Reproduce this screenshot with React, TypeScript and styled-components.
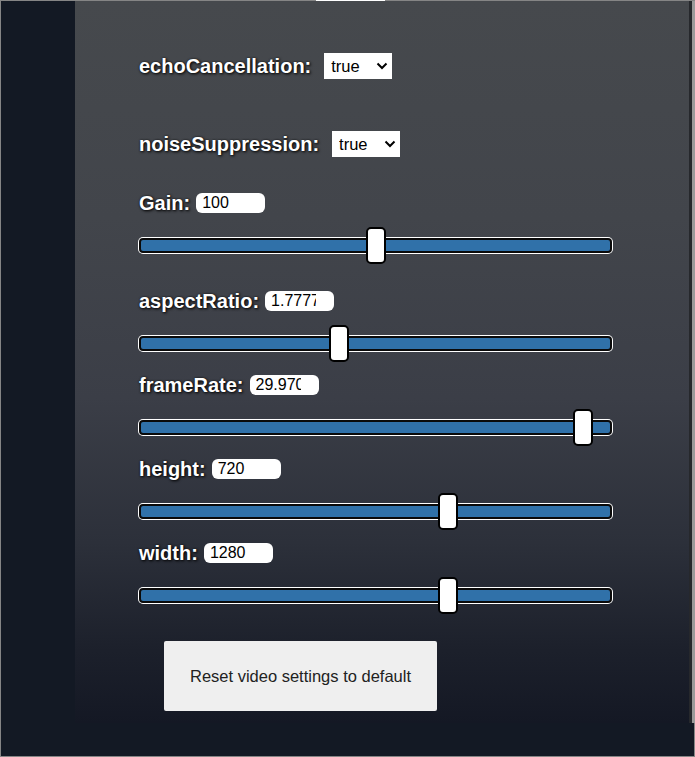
import React from "react";
import styled, { createGlobalStyle } from "styled-components";

const GlobalStyle = createGlobalStyle`
  html, body { margin: 0; padding: 0; background: #131924; }
  * { box-sizing: border-box; }
`;

const Frame = styled.div`
  position: relative;
  width: 695px;
  height: 757px;
  border: 1px solid #858585;
  background: #131924;
  display: flex;
  align-items: flex-start;
  padding-left: 74px;
  font-family: "Liberation Sans", Arial, sans-serif;
`;

const TopEdge = styled.div`
  position: absolute;
  top: -1px;
  left: 315px;
  width: 69px;
  height: 1px;
  background: #ffffff;
`;

const Panel = styled.main`
  width: 617px;
  height: 722px;
  border-right: 3px solid #26282c;
  box-shadow: 3px 0 0 #9a9a9a;
  background: linear-gradient(
    180deg,
    #46494d 0%,
    #42454b 30%,
    #3b3e47 55%,
    #2c303a 75%,
    #1c202b 90%,
    #141824 100%
  );
  padding: 52px 0 0 64px;
  display: flex;
  flex-direction: column;
`;

const SelectRow = styled.div<{ $gap: number }>`
  display: flex;
  align-items: center;
  gap: 13px;
  height: 26px;
  margin-top: ${(p) => p.$gap}px;
`;

const Label = styled.label`
  color: #ffffff;
  font-size: 20px;
  font-weight: bold;
  text-shadow: 1px 1px 3px #000, 0 0 2px rgba(0, 0, 0, 0.6);
  white-space: nowrap;
`;

const SelectBox = styled.div`
  display: inline-flex;
  align-items: center;
  width: 68px;
  height: 26px;
  background: #ffffff;
  padding: 0 4px 0 7px;
`;

const Select = styled.select`
  appearance: none;
  -webkit-appearance: none;
  border: none;
  outline: none;
  background: transparent;
  font-family: "Liberation Sans", Arial, sans-serif;
  font-size: 16.5px;
  color: #000;
  padding: 0;
  margin: 0;
  flex: 1;
  min-width: 0;
`;

const Chevron = styled.svg`
  width: 12px;
  height: 8px;
  pointer-events: none;
  flex: none;
`;

const Section = styled.section<{ $top: number; $after: number }>`
  display: flex;
  flex-direction: column;
  gap: 13px;
  margin-top: ${(p) => p.$top}px;
  margin-bottom: ${(p) => p.$after}px;
`;

const Field = styled.div`
  display: flex;
  flex-direction: column;
  gap: 13px;
`;

const FieldHead = styled.div`
  display: flex;
  align-items: center;
  gap: 6px;
  height: 20px;
`;

const NumberBox = styled.div`
  display: inline-flex;
  align-items: center;
  width: 69px;
  height: 20px;
  border-radius: 6px;
  background: #ffffff;
  padding: 0 0 0 6px;
`;

const NumberInput = styled.input`
  width: 45px;
  height: 20px;
  border: none;
  outline: none;
  background: transparent;
  padding: 0;
  margin: 0;
  font-family: "Liberation Sans", Arial, sans-serif;
  font-size: 16px;
  color: #000;
  -moz-appearance: textfield;

  &::-webkit-inner-spin-button,
  &::-webkit-outer-spin-button {
    -webkit-appearance: none;
    display: none;
    margin: 0;
  }
`;

const Range = styled.input`
  -webkit-appearance: none;
  appearance: none;
  width: 473px;
  height: 38px;
  margin: 0;
  padding: 0;
  background: transparent;

  &::-webkit-slider-runnable-track {
    box-sizing: border-box;
    height: 15px;
    background: #3071a9;
    border: 2px solid #0a0a0a;
    border-radius: 4px;
    box-shadow: 0 0 0 1px #ffffff;
  }

  &::-webkit-slider-thumb {
    -webkit-appearance: none;
    box-sizing: border-box;
    width: 20px;
    height: 37px;
    border: 2px solid #000;
    border-radius: 5px;
    background: #ffffff;
    margin-top: -13px;
  }
`;

const ResetButton = styled.button`
  margin-left: 25px;
  margin-top: 27px;
  width: 273px;
  height: 70px;
  border: none;
  border-radius: 2px;
  background: #efefef;
  color: #222;
  font-family: "Liberation Sans", Arial, sans-serif;
  font-size: 16.5px;
  padding: 0;
`;

type SliderDef = {
  name: string;
  value: number;
  min: number;
  max: number;
};

const audio: SliderDef[] = [{ name: "Gain", value: 100, min: 0, max: 200 }];

const video: SliderDef[] = [
  { name: "aspectRatio", value: 1.7777777777777777, min: 0, max: 4.24 },
  { name: "frameRate", value: 29.97002997002997, min: 0, max: 31.14 },
  { name: "height", value: 720, min: 0, max: 1090 },
  { name: "width", value: 1280, min: 0, max: 1932 },
];

const SelectSetting: React.FC<{ name: string; gap: number }> = ({ name, gap }) => (
  <SelectRow $gap={gap}>
    <Label>{name}:</Label>
    <SelectBox>
      <Select defaultValue="true">
        <option value="true">true</option>
        <option value="false">false</option>
      </Select>
      <Chevron viewBox="0 0 12 8">
        <path d="M1.5 1.5 L6 6 L10.5 1.5" fill="none" stroke="#000" strokeWidth="2" />
      </Chevron>
    </SelectBox>
  </SelectRow>
);

const SliderField: React.FC<SliderDef> = ({ name, value, min, max }) => (
  <Field>
    <FieldHead>
      <Label>{name}:</Label>
      <NumberBox>
        <NumberInput type="number" step="any" defaultValue={value} />
      </NumberBox>
    </FieldHead>
    <Range type="range" min={min} max={max} step="any" defaultValue={value} />
  </Field>
);

export default function App() {
  return (
    <>
      <GlobalStyle />
      <Frame>
        <TopEdge />
        <Panel>
          <SelectSetting name="echoCancellation" gap={0} />
          <SelectSetting name="noiseSuppression" gap={52} />
          <Section $top={36} $after={27}>
            {audio.map((s) => (
              <SliderField key={s.name} {...s} />
            ))}
          </Section>
          <Section $top={0} $after={0}>
            {video.map((s) => (
              <SliderField key={s.name} {...s} />
            ))}
          </Section>
          <ResetButton>Reset video settings to default</ResetButton>
        </Panel>
      </Frame>
    </>
  );
}
